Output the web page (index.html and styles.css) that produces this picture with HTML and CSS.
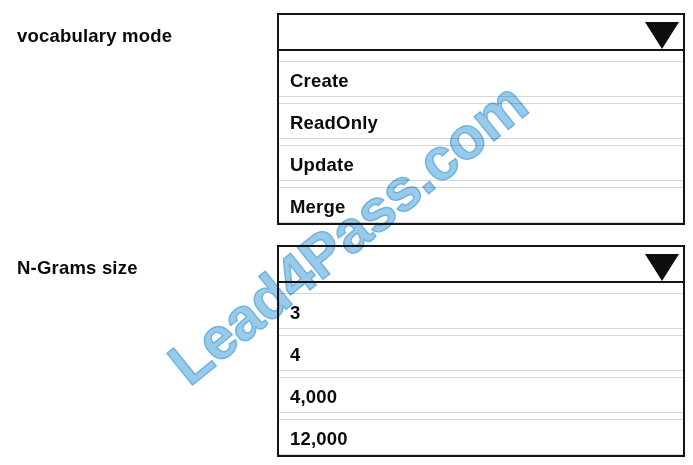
FILE: index.html
```html
<!DOCTYPE html>
<html>
<head>
<meta charset="utf-8">
<link rel="stylesheet" href="styles.css">
</head>
<body>
<div class="page">
  <div class="field">
    <div class="label">vocabulary mode</div>
    <div class="select">
      <div class="select-head">
        <svg class="arrow" width="34" height="27" viewBox="0 0 34 27"><polygon points="0,0 34,0 17,27" fill="#0d0d0d"/></svg>
      </div>
      <ul class="options">
        <li class="option">Create</li>
        <li class="option">ReadOnly</li>
        <li class="option">Update</li>
        <li class="option">Merge</li>
      </ul>
    </div>
  </div>
  <div class="field">
    <div class="label">N-Grams size</div>
    <div class="select">
      <div class="select-head">
        <svg class="arrow" width="34" height="27" viewBox="0 0 34 27"><polygon points="0,0 34,0 17,27" fill="#0d0d0d"/></svg>
      </div>
      <ul class="options">
        <li class="option">3</li>
        <li class="option">4</li>
        <li class="option">4,000</li>
        <li class="option">12,000</li>
      </ul>
    </div>
  </div>
  <div class="watermark">Lead4Pass.com</div>
</div>
</body>
</html>
```

FILE: styles.css
```css
html, body {
  margin: 0;
  padding: 0;
  background: #ffffff;
}

.page {
  position: relative;
  width: 693px;
  height: 465px;
  overflow: hidden;
  padding-top: 13px;
  box-sizing: border-box;
  display: flex;
  flex-direction: column;
  gap: 20px;
  font-family: "Liberation Sans", Arial, sans-serif;
  font-weight: bold;
  font-size: 18.5px;
  letter-spacing: 0.2px;
  color: #0a0a0a;
}

.field {
  display: grid;
  grid-template-columns: 277px 408px;
}

.label {
  padding-left: 17px;
  padding-top: 13px;
  line-height: 20px;
}

.select {
  border: 2px solid #151515;
  background: #ffffff;
}

.select-head {
  height: 34px;
  border-bottom: 2px solid #151515;
  display: flex;
  justify-content: flex-end;
  align-items: flex-end;
  padding-right: 4px;
}

.arrow {
  display: block;
}

.options {
  list-style: none;
  margin: 0;
  padding: 10px 0 0 0;
  display: flex;
  flex-direction: column;
  gap: 6px;
}

.option {
  box-sizing: border-box;
  height: 36px;
  border-top: 1px solid #d7d7d7;
  border-bottom: 1px solid #d7d7d7;
  padding: 9px 0 0 11px;
  line-height: 20px;
}

.watermark {
  position: absolute;
  left: 348px;
  top: 234px;
  transform: translate(-50%, -50%) rotate(-39deg);
  font-size: 59px;
  line-height: 1;
  letter-spacing: -0.5px;
  white-space: nowrap;
  color: #98cbeb;
  -webkit-text-stroke: 1.5px #72b4de;
  mix-blend-mode: multiply;
  pointer-events: none;
}
```
